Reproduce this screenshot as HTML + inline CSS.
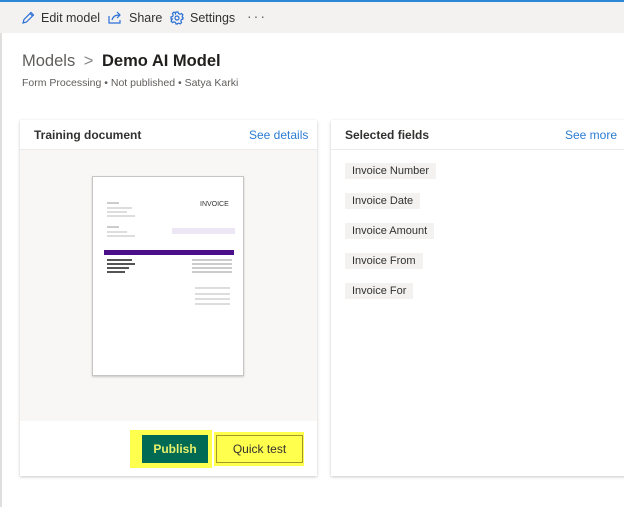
<!DOCTYPE html><html><head><style>
*{margin:0;padding:0;box-sizing:border-box}
body{width:624px;height:507px;background:#fff;font-family:"Liberation Sans",sans-serif;position:relative;overflow:hidden;color:#323130}
.a{position:absolute}
.tb{left:0;top:0;width:624px;height:33px;background:#f3f2f1;border-top:2px solid #2b88d8}
.tbi{top:11px;font-size:12.5px;color:#323130}
.card{background:#fff;box-shadow:0 1px 3px rgba(0,0,0,.22);}
.hd{font-size:12px;font-weight:bold;color:#323130}
.lk{font-size:12px;color:#2b7cd3}
.tag{left:345px;height:16px;background:#f3f2f1;font-size:11px;padding:2px 7px;line-height:12px}
.ln{height:2px;background:#ccc}
</style></head><body>
<div class="a tb"></div>
<div class="a" style="left:0;top:33px;width:2px;height:474px;background:#e1dfdd"></div>
<svg class="a" style="left:21px;top:11px" width="14" height="14" viewBox="0 0 14 14" fill="none" stroke="#2b6fd6" stroke-width="1.2"><path d="M2 12l1-3.5 7-7 2.5 2.5-7 7z M9 2.5l2.5 2.5"/></svg>
<div class="a tbi" style="left:41px">Edit model</div>
<svg class="a" style="left:108px;top:11px" width="15" height="13" viewBox="0 0 15 13" fill="none" stroke="#2b6fd6" stroke-width="1.2"><path d="M1 5v7h11V9 M4 9c1-4 4-5 7-5 M9 1l3 3-3 3"/></svg>
<div class="a tbi" style="left:129px">Share</div>
<svg class="a" style="left:170px;top:11px" width="14" height="14" viewBox="0 0 14 14" fill="none" stroke="#2b6fd6" stroke-width="1.2"><circle cx="7" cy="7" r="2"/><path d="M6 1h2l.5 1.6 1.5.7 1.5-.8 1.4 1.4-.8 1.5.6 1.5L13 6v2l-1.6.5-.6 1.5.8 1.5-1.4 1.4-1.5-.8-1.5.6L8 13H6l-.5-1.6-1.5-.6-1.5.8-1.4-1.4.8-1.5L2.3 8 1 8V6l1.6-.5.6-1.5-.8-1.5 1.4-1.4 1.5.8L5.5 2.6z"/></svg>
<div class="a tbi" style="left:190px">Settings</div>
<div class="a tbi" style="left:247px;top:8px;letter-spacing:2px;color:#605e5c;font-size:14px">···</div>
<div class="a" style="left:22px;top:52px;font-size:16.5px;color:#605e5c">Models <span style="margin:0 4px;color:#8a8886">&gt;</span> <b style="color:#201f1e">Demo AI Model</b></div>
<div class="a" style="left:22px;top:77px;font-size:10.5px;color:#605e5c">Form Processing • Not published • Satya Karki</div>

<div class="a card" style="left:20px;top:120px;width:297px;height:356px"></div>
<div class="a hd" style="left:34px;top:128px">Training document</div>
<div class="a lk" style="left:249px;top:128px">See details</div>
<div class="a" style="left:20px;top:149px;width:297px;height:272px;background:#f8f7f6;border-top:1px solid #edebe9"></div>
<div class="a" style="left:92px;top:176px;width:152px;height:200px;background:#fff;border:1px solid #c8c6c4;box-shadow:0 1px 2px rgba(0,0,0,.2)"></div>
<div class="a" style="left:200px;top:201px;font-size:7px;color:#333">INVOICE</div>
<div class="a ln" style="left:107px;top:202px;width:12px"></div>
<div class="a ln" style="left:107px;top:207px;width:25px;background:#ddd"></div>
<div class="a ln" style="left:107px;top:211px;width:20px;background:#ddd"></div>
<div class="a ln" style="left:107px;top:215px;width:28px;background:#ddd"></div>
<div class="a ln" style="left:107px;top:226px;width:12px"></div>
<div class="a ln" style="left:107px;top:231px;width:20px;background:#ddd"></div>
<div class="a ln" style="left:107px;top:235px;width:28px;background:#ddd"></div>
<div class="a" style="left:172px;top:228px;width:63px;height:6px;background:#ece6f5"></div>
<div class="a" style="left:104px;top:250px;width:130px;height:5px;background:#4b0f8a"></div>
<div class="a ln" style="left:107px;top:259px;width:25px;background:#555"></div>
<div class="a ln" style="left:107px;top:263px;width:28px;background:#555"></div>
<div class="a ln" style="left:107px;top:267px;width:22px;background:#555"></div>
<div class="a ln" style="left:107px;top:271px;width:18px;background:#555"></div>
<div class="a ln" style="left:192px;top:259px;width:40px;background:#ccc"></div>
<div class="a ln" style="left:192px;top:263px;width:40px;background:#ccc"></div>
<div class="a ln" style="left:192px;top:267px;width:40px;background:#ccc"></div>
<div class="a ln" style="left:192px;top:271px;width:40px;background:#ccc"></div>
<div class="a ln" style="left:195px;top:287px;width:35px;background:#ddd"></div>
<div class="a ln" style="left:195px;top:293px;width:35px;background:#ddd"></div>
<div class="a ln" style="left:195px;top:298px;width:35px;background:#ddd"></div>
<div class="a ln" style="left:195px;top:303px;width:35px;background:#ddd"></div>
<div class="a" style="left:130px;top:430px;width:82px;height:38px;background:#ffff4d"></div>
<div class="a" style="left:142px;top:435px;width:66px;height:28px;background:#006a55;color:#e8f26a;font-size:12px;font-weight:bold;text-align:center;line-height:28px">Publish</div>
<div class="a" style="left:214px;top:432px;width:90px;height:34px;background:#ffff4d"></div>
<div class="a" style="left:216px;top:435px;width:87px;height:28px;border:1px solid #a09a2a;color:#323130;font-size:12px;text-align:center;line-height:26px">Quick test</div>

<div class="a card" style="left:331px;top:120px;width:300px;height:356px"></div>
<div class="a hd" style="left:345px;top:128px">Selected fields</div>
<div class="a lk" style="left:565px;top:128px">See more</div>
<div class="a" style="left:331px;top:149px;width:293px;height:1px;background:#edebe9"></div>
<div class="a tag" style="top:163px">Invoice Number</div>
<div class="a tag" style="top:193px">Invoice Date</div>
<div class="a tag" style="top:223px">Invoice Amount</div>
<div class="a tag" style="top:253px">Invoice From</div>
<div class="a tag" style="top:283px">Invoice For</div>
</body></html>
